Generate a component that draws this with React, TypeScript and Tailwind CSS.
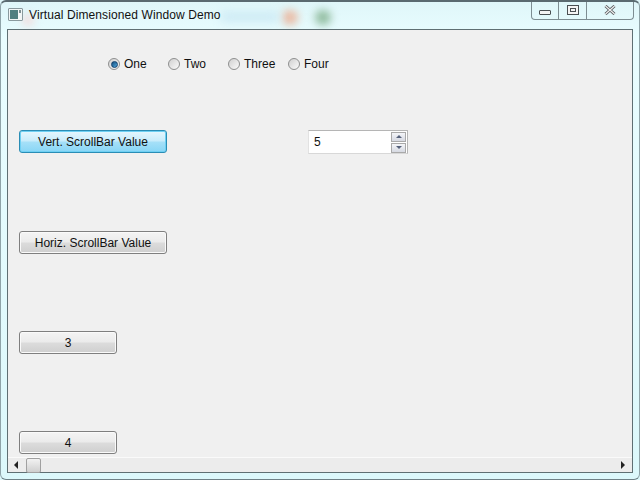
import { ReactNode } from 'react';

const radios = [
  { label: 'One', checked: true, width: 'w-[60px]' },
  { label: 'Two', checked: false, width: 'w-[60px]' },
  { label: 'Three', checked: false, width: 'w-[60px]' },
  { label: 'Four', checked: false, width: 'w-auto' },
];

function Radio({ label, checked, width }: { label: string; checked: boolean; width: string }) {
  return (
    <div className={`flex items-center ${width}`}>
      <span className="flex h-[12px] w-[12px] items-center justify-center rounded-full border border-[#8e8f8f] bg-gradient-to-br from-[#d0d0d0] to-[#fbfbfb]">
        {checked && <span className="h-[7px] w-[7px] rounded-full border border-[#0f3f6c] bg-gradient-to-br from-[#14507f] to-[#4fa6dc]" />}
      </span>
      <span className="ml-[4px] text-[12px] leading-[14px] text-[#111]">{label}</span>
    </div>
  );
}

function Button({ children, width, focused }: { children: ReactNode; width: string; focused?: boolean }) {
  return (
    <button
      className={`block h-[23px] ${width} rounded-[3px] border pt-[1px] text-[12px] leading-[20px] text-[#111] ${
        focused
          ? 'border-[#2a8db5] shadow-[inset_0_0_0_1px_#6fd0f3] bg-[linear-gradient(to_bottom,#e6f7fe_0%,#c8ecfb_48%,#a6e0f8_52%,#88d6f6_100%)]'
          : 'border-[#7f7f7f] shadow-[inset_0_0_0_1px_#fafafa] bg-[linear-gradient(to_bottom,#f4f4f4_0%,#ebebeb_48%,#dcdcdc_52%,#cfcfcf_100%)]'
      }`}
    >
      {children}
    </button>
  );
}

export default function App() {
  return (
    <div className="relative h-[480px] w-[640px] overflow-hidden bg-[linear-gradient(to_bottom,#dff6f9_0%,#e9fdff_8%,#dcf8fb_100%)] font-['Liberation_Sans',Arial,sans-serif]">
      {/* blurred stuff showing through the glass */}
      <div className="absolute left-[282px] top-[10px] h-[15px] w-[16px] rounded-full bg-[#eab9a2] blur-[4px]" />
      <div className="absolute left-[315px] top-[10px] h-[15px] w-[16px] rounded-full bg-[#8fbb9d] blur-[4px]" />
      <div className="absolute left-[220px] top-[12px] h-[10px] w-[60px] rounded-full bg-[#cdeaf5] blur-[5px]" />
      <div className="absolute left-[22px] top-[14px] h-[12px] w-[12px] rounded-full bg-[#f3dcdc] blur-[4px]" />

      <div className="relative flex h-full flex-col px-[7px] pb-[7px]">
        <div className="flex h-[29px] shrink-0 items-start">
          <div className="ml-[1px] mt-[8px] flex h-[13px] w-[15px] items-center justify-between rounded-[1px] border border-[#8a9a9e] bg-[#f2f6f6] pl-[1px] pr-[1px]">
            <span className="h-[9px] w-[8px] bg-[#4f7f80]" />
            <span className="mt-[1px] h-[3px] w-[2px] self-start bg-[#7f8f92]" />
          </div>
          <span className="ml-[6px] mt-[8px] text-[12px] leading-[14px] tracking-[0.1px] text-[#111]">Virtual Dimensioned Window Demo</span>
          <div className="ml-auto mr-[-1px] flex h-[20px] rounded-b-[4px] border border-t-0 border-[#7d8d92]">
            <div className="flex w-[27px] items-end justify-center border-r border-[#7d8d92] pb-[4px]">
              <span className="h-[5px] w-[12px] rounded-[1px] border border-[#4a4f52] bg-[#f4f4f4]" />
            </div>
            <div className="flex w-[28px] items-center justify-center border-r border-[#7d8d92]">
              <span className="flex h-[10px] w-[12px] items-center justify-center border border-[#4a4f52] bg-[#f4f4f4]">
                <span className="h-[4px] w-[6px] border border-[#4a4f52]" />
              </span>
            </div>
            <div className="flex w-[46px] items-center justify-center">
              <svg width="12" height="10" viewBox="0 0 12 10">
                <path d="M1.5 1 L10.5 9 M10.5 1 L1.5 9" stroke="#55595c" strokeWidth="3" />
                <path d="M1.5 1 L10.5 9 M10.5 1 L1.5 9" stroke="#f2f2f2" strokeWidth="1.2" />
              </svg>
            </div>
          </div>
        </div>

        <div className="flex min-h-0 flex-1 flex-col border border-[#5f6f73] bg-[#f0f0f0]">
          <div className="flex-1 pl-[11px]">
            <div className="ml-[89px] mt-[27px] flex h-[14px]">
              {radios.map((r) => (
                <Radio key={r.label} {...r} />
              ))}
            </div>
            <div className="mt-[59px] flex items-start">
              <Button width="w-[148px]" focused>
                Vert. ScrollBar Value
              </Button>
              <div className="ml-[141px] flex h-[24px] w-[100px] items-center border border-[#b5b5b5] border-b-[#d8d8d8] border-l-[#e2e2e2] bg-white">
                <span className="ml-[5px] flex-1 text-[12px] leading-[14px] text-[#111]">5</span>
                <div className="mr-[1px] flex w-[15px] flex-col gap-px">
                  <div className="flex h-[10px] items-center justify-center border border-[#a9a9a9] bg-[linear-gradient(to_bottom,#f4f5f8,#d6d9e2)]">
                    <span className="h-0 w-0 border-x-[3px] border-b-[3px] border-x-transparent border-b-[#55607a]" />
                  </div>
                  <div className="flex h-[10px] items-center justify-center border border-[#a9a9a9] bg-[linear-gradient(to_bottom,#f4f5f8,#d6d9e2)]">
                    <span className="h-0 w-0 border-x-[3px] border-t-[3px] border-x-transparent border-t-[#55607a]" />
                  </div>
                </div>
              </div>
            </div>
            <div className="mt-[77px]">
              <Button width="w-[148px]">Horiz. ScrollBar Value</Button>
            </div>
            <div className="mt-[77px]">
              <Button width="w-[98px]">3</Button>
            </div>
            <div className="mt-[77px]">
              <Button width="w-[98px]">4</Button>
            </div>
          </div>

          <div className="flex h-[15px] shrink-0 items-center border-t border-[#fafafa] bg-[#ececec]">
            <span className="ml-[6px] h-0 w-0 border-y-[4px] border-r-[4px] border-y-transparent border-r-[#222]" />
            <span className="ml-[8px] h-[15px] w-[15px] rounded-[2px] border border-[#a0a0a0] bg-[linear-gradient(to_bottom,#f2f2f2,#cfcfcf)]" />
            <span className="ml-auto mr-[7px] h-0 w-0 border-y-[4px] border-l-[4px] border-y-transparent border-l-[#222]" />
          </div>
        </div>
      </div>

      {/* window edge, sits over everything */}
      <div className="pointer-events-none absolute inset-0 rounded-[6px] border border-x-[#8fa3a8] border-b-[#6f8086] border-t-[2px] border-t-[#5a6a70]" />
    </div>
  );
}
